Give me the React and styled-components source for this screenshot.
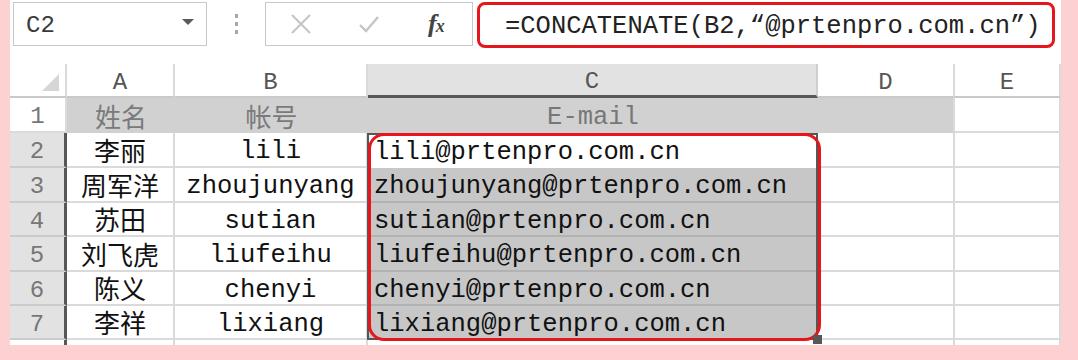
import React from "react";
import styled, { createGlobalStyle } from "styled-components";

const GlobalStyle = createGlobalStyle`
  html, body {
    margin: 0;
    padding: 0;
    background: #fdd0d1;
  }
  body {
    font-family: "Liberation Mono", "Noto Sans CJK SC", monospace;
  }
`;

const COLS = [57, 108, 193, 450, 137, 106];
const ROWS = [34, 35, 35, 35, 34, 35, 34, 34, 4];

const people = [
  ["李丽", "lili"],
  ["周军洋", "zhoujunyang"],
  ["苏田", "sutian"],
  ["刘飞虎", "liufeihu"],
  ["陈义", "chenyi"],
  ["李祥", "lixiang"],
];

const Page = styled.div`
  width: 1078px;
  height: 360px;
  padding-left: 10px;
  box-sizing: border-box;
  background: #fdd0d1;
  overflow: hidden;
`;

const Sheet = styled.div`
  width: 1051px;
  height: 344px;
  background: #fff;
  display: flex;
  flex-direction: column;
`;

const FormulaBar = styled.div`
  display: flex;
  align-items: flex-start;
  height: 64px;
  padding-top: 2px;
  box-sizing: border-box;
`;

const NameBox = styled.div`
  margin-left: 3px;
  width: 194px;
  height: 44px;
  box-sizing: border-box;
  border: 1px solid #c8c8c8;
  display: flex;
  align-items: center;
  justify-content: space-between;
  padding: 2px 12px 0 12px;
  font-size: 24px;
  color: #3a3a3a;
`;

const Arrow = styled.span`
  width: 0;
  height: 0;
  border-left: 6px solid transparent;
  border-right: 6px solid transparent;
  border-top: 6px solid #5a5a5a;
  margin-top: -6px;
`;

const Grip = styled.div`
  width: 58px;
  height: 44px;
  display: flex;
  flex-direction: column;
  align-items: center;
  justify-content: center;
  gap: 4px;
`;

const Dot = styled.span`
  width: 3px;
  height: 4px;
  background: #a8a8a8;
`;

const ButtonBox = styled.div`
  width: 208px;
  height: 44px;
  box-sizing: border-box;
  border: 1px solid #c8c8c8;
  display: flex;
  align-items: center;
  padding-left: 24px;
  gap: 46px;
`;

const Fx = styled.span`
  font-family: "Liberation Serif", serif;
  font-style: italic;
  font-weight: bold;
  font-size: 26px;
  color: #444;
  letter-spacing: -1px;
  margin-left: 2px;

  small {
    font-size: 18px;
  }
`;

const FormulaInput = styled.div`
  margin-left: 4px;
  width: 578px;
  height: 46px;
  box-sizing: border-box;
  border: 3px solid #e5161c;
  border-radius: 8px;
  display: flex;
  align-items: center;
  padding: 2px 0 0 25px;
  font-size: 25.5px;
  color: #222;
  white-space: nowrap;
`;

const Grid = styled.div`
  display: grid;
  grid-template-columns: ${COLS.map((c) => c + "px").join(" ")};
  grid-template-rows: ${ROWS.map((r) => r + "px").join(" ")};
`;

const Cell = styled.div`
  grid-row: ${(p) => p.$r};
  grid-column: ${(p) => p.$c};
  box-sizing: border-box;
  display: flex;
  align-items: center;
  justify-content: ${(p) => (p.$left ? "flex-start" : "center")};
  padding: ${(p) => (p.$cjk ? "0" : "5px")} 0 0 ${(p) => (p.$left ? "6px" : "0")};
  line-height: ${(p) => (p.$cjk ? 1.2 : 1)};
  background: ${(p) => p.$bg || "#fff"};
  border-right: ${(p) => p.$right || "2px solid #dadada"};
  border-bottom: ${(p) => p.$bottom || "2px solid #dadada"};
  color: ${(p) => p.$color || "#111"};
  font-size: ${(p) => p.$size || 25.5}px;
  font-family: ${(p) =>
    p.$cjk
      ? '"Noto Sans CJK SC", sans-serif'
      : '"Liberation Mono", "Noto Sans CJK SC", monospace'};
  white-space: nowrap;
  position: relative;
`;

const Corner = styled(Cell)`
  &::after {
    content: "";
    position: absolute;
    right: 6px;
    bottom: 5px;
    width: 0;
    height: 0;
    border-left: 17px solid transparent;
    border-bottom: 17px solid #d6d6d6;
  }
`;

const Selection = styled.div`
  grid-column: 4;
  grid-row: 3 / span 6;
  margin-left: -1px;
  border: 2px solid #575757;
  position: relative;
  pointer-events: none;
  z-index: 2;
`;

const Handle = styled.span`
  position: absolute;
  right: -6px;
  bottom: -6px;
  width: 9px;
  height: 9px;
  background: #575757;
`;

const Ring = styled.span`
  position: absolute;
  left: -1px;
  top: -2px;
  right: -5px;
  bottom: -3px;
  border: 3px solid #e5161c;
  border-radius: 16px;
`;

const Icon = ({ children, w = 22 }) => (
  <svg width={w} height={w} viewBox="0 0 22 22" fill="none">
    {children}
  </svg>
);

export default function App() {
  const colHeads = ["A", "B", "C", "D", "E"];

  return (
    <>
      <GlobalStyle />
      <Page>
        <Sheet>
          <FormulaBar>
            <NameBox>
              C2
              <Arrow />
            </NameBox>
            <Grip>
              <Dot />
              <Dot />
              <Dot />
            </Grip>
            <ButtonBox>
              <Icon>
                <path d="M2 2 L20 20 M20 2 L2 20" stroke="#c4c4c4" strokeWidth="2" />
              </Icon>
              <Icon>
                <path d="M2 12 L8 18 L20 4" stroke="#c4c4c4" strokeWidth="2.4" />
              </Icon>
              <Fx>
                f<small>x</small>
              </Fx>
            </ButtonBox>
            <FormulaInput>=CONCATENATE(B2,“@prtenpro.com.cn”)</FormulaInput>
          </FormulaBar>

          <Grid>
            <Corner $r={1} $c={1} $bottom="2px solid #c9c9c9" />
            {colHeads.map((h, j) =>
              h === "C" ? (
                <Cell key={h} $r={1} $c={j + 2} $bg="#e2e2e2" $color="#555" $size={24} $bottom="3px solid #575757" $right="2px solid #cfcfcf">
                  {h}
                </Cell>
              ) : (
                <Cell key={h} $r={1} $c={j + 2} $color="#555" $size={24} $bottom="2px solid #c9c9c9">
                  {h}
                </Cell>
              )
            )}

            <Cell $r={2} $c={1} $color="#777" $size={24}>1</Cell>
            <Cell $r={2} $c={2} $cjk $bg="#d1d1d1" $color="#7a7a7a" $size={26} $right="none" $bottom="none">姓名</Cell>
            <Cell $r={2} $c={3} $cjk $bg="#d1d1d1" $color="#7a7a7a" $size={26} $right="none" $bottom="none">帐号</Cell>
            <Cell $r={2} $c={4} $bg="#d1d1d1" $color="#777" $right="none" $bottom="none">E-mail</Cell>
            <Cell $r={2} $c={5} $bg="#d1d1d1" $bottom="none" />
            <Cell $r={2} $c={6} />

            {people.map(([name, user], i) => (
              <React.Fragment key={user}>
                <Cell $r={i + 3} $c={1} $bg="#e2e2e2" $color="#777" $size={24} $right="3px solid #575757" $bottom="2px solid #cbcbcb">
                  {i + 2}
                </Cell>
                <Cell $r={i + 3} $c={2} $cjk $size={26}>{name}</Cell>
                <Cell $r={i + 3} $c={3}>{user}</Cell>
                <Cell
                  $r={i + 3}
                  $c={4}
                  $left
                  $bg={i === 0 ? "#fff" : "#c7c7c7"}
                  $right="none"
                  $bottom={i === 0 ? "none" : "2px solid #b2b2b2"}
                >
                  {user}@prtenpro.com.cn
                </Cell>
                <Cell $r={i + 3} $c={5} />
                <Cell $r={i + 3} $c={6} />
              </React.Fragment>
            ))}

            {COLS.map((_, j) => (
              <Cell
                key={j}
                $r={9}
                $c={j + 1}
                $bottom="none"
                $right={j === 0 ? "3px solid #575757" : j === 3 ? "none" : undefined}
              />
            ))}

            <Selection>
              <Ring />
              <Handle />
            </Selection>
          </Grid>
        </Sheet>
      </Page>
    </>
  );
}
